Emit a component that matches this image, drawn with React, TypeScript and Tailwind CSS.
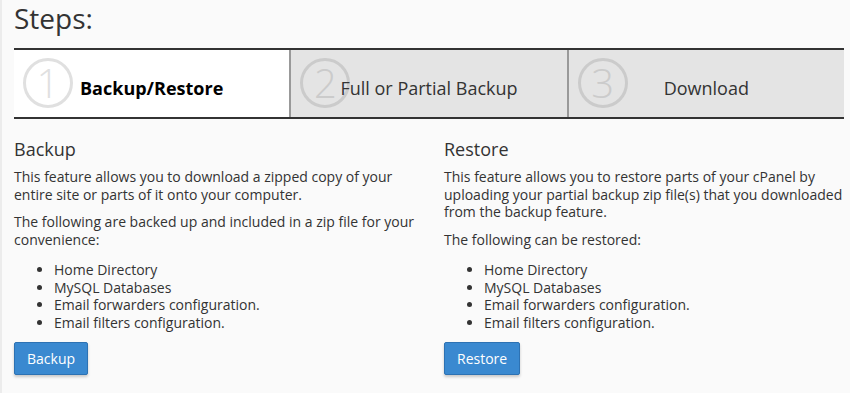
import React from "react";

const steps = [
  { n: "1", label: "Backup/Restore", active: true },
  { n: "2", label: "Full or Partial Backup", active: false },
  { n: "3", label: "Download", active: false },
];

const items = [
  "Home Directory",
  "MySQL Databases",
  "Email forwarders configuration.",
  "Email filters configuration.",
];

function Section({ title, paras, button }: { title: string; paras: string[]; button: string }) {
  return (
    <div>
      <h2 className="text-[18px] leading-[20px] font-normal">{title}</h2>
      <p className="mt-[9px] text-[14px] leading-[17.7px]">{paras[0]}</p>
      <p className="mt-[10px] text-[14px] leading-[17.7px]">{paras[1]}</p>
      <ul className="mt-[12px] list-disc pl-[40px] text-[14px] leading-[17.7px]">
        {items.map((it) => (
          <li key={it}>{it}</li>
        ))}
      </ul>
      <button className="mt-[10px] h-[33px] rounded-[2px] border border-[#2d72b3] bg-[#3a89d0] px-[12px] text-[14px] text-white shadow-[0_2px_3px_rgba(0,0,0,0.2)]">
        {button}
      </button>
    </div>
  );
}

export default function App() {
  return (
    <div
      className="min-h-[393px] w-[850px] border-l-2 border-[#ececec] bg-[#fafafa] pl-[12px] pr-[6px] text-[#333]"
      style={{ fontFamily: '"Open Sans", "Liberation Sans", sans-serif' }}
    >
      <h1 className="pt-[1px] text-[28px] leading-[34px] font-normal">Steps:</h1>

      <div className="mt-[13px] flex border-y-2 border-[#333]">
        {steps.map((s, i) => (
          <div
            key={s.n}
            className={`relative h-[67px] flex-1 pt-[28px] text-center text-[18px] leading-[20px] ${
              s.active ? "bg-white font-bold text-black" : "bg-[#e4e4e4]"
            } ${i > 0 ? "border-l-2 border-[#999]" : ""}`}
          >
            <span
              className={`absolute left-[9px] top-[8px] flex h-[50px] w-[50px] items-center justify-center rounded-full border-[3px] pb-[1px] text-[40px] leading-none font-light ${
                s.active ? "border-[#e0e0e0] text-[#e0e0e0]" : "border-[#cbcbcb] text-[#cbcbcb]"
              }`}
            >
              {s.n}
            </span>
            <span className="relative">{s.label}</span>
          </div>
        ))}
      </div>

      <div className="mt-[20px] grid grid-cols-[415px_1fr] gap-[15px]">
        <Section
          title="Backup"
          paras={[
            "This feature allows you to download a zipped copy of your entire site or parts of it onto your computer.",
            "The following are backed up and included in a zip file for your convenience:",
          ]}
          button="Backup"
        />
        <Section
          title="Restore"
          paras={[
            "This feature allows you to restore parts of your cPanel by uploading your partial backup zip file(s) that you downloaded from the backup feature.",
            "The following can be restored:",
          ]}
          button="Restore"
        />
      </div>
    </div>
  );
}
